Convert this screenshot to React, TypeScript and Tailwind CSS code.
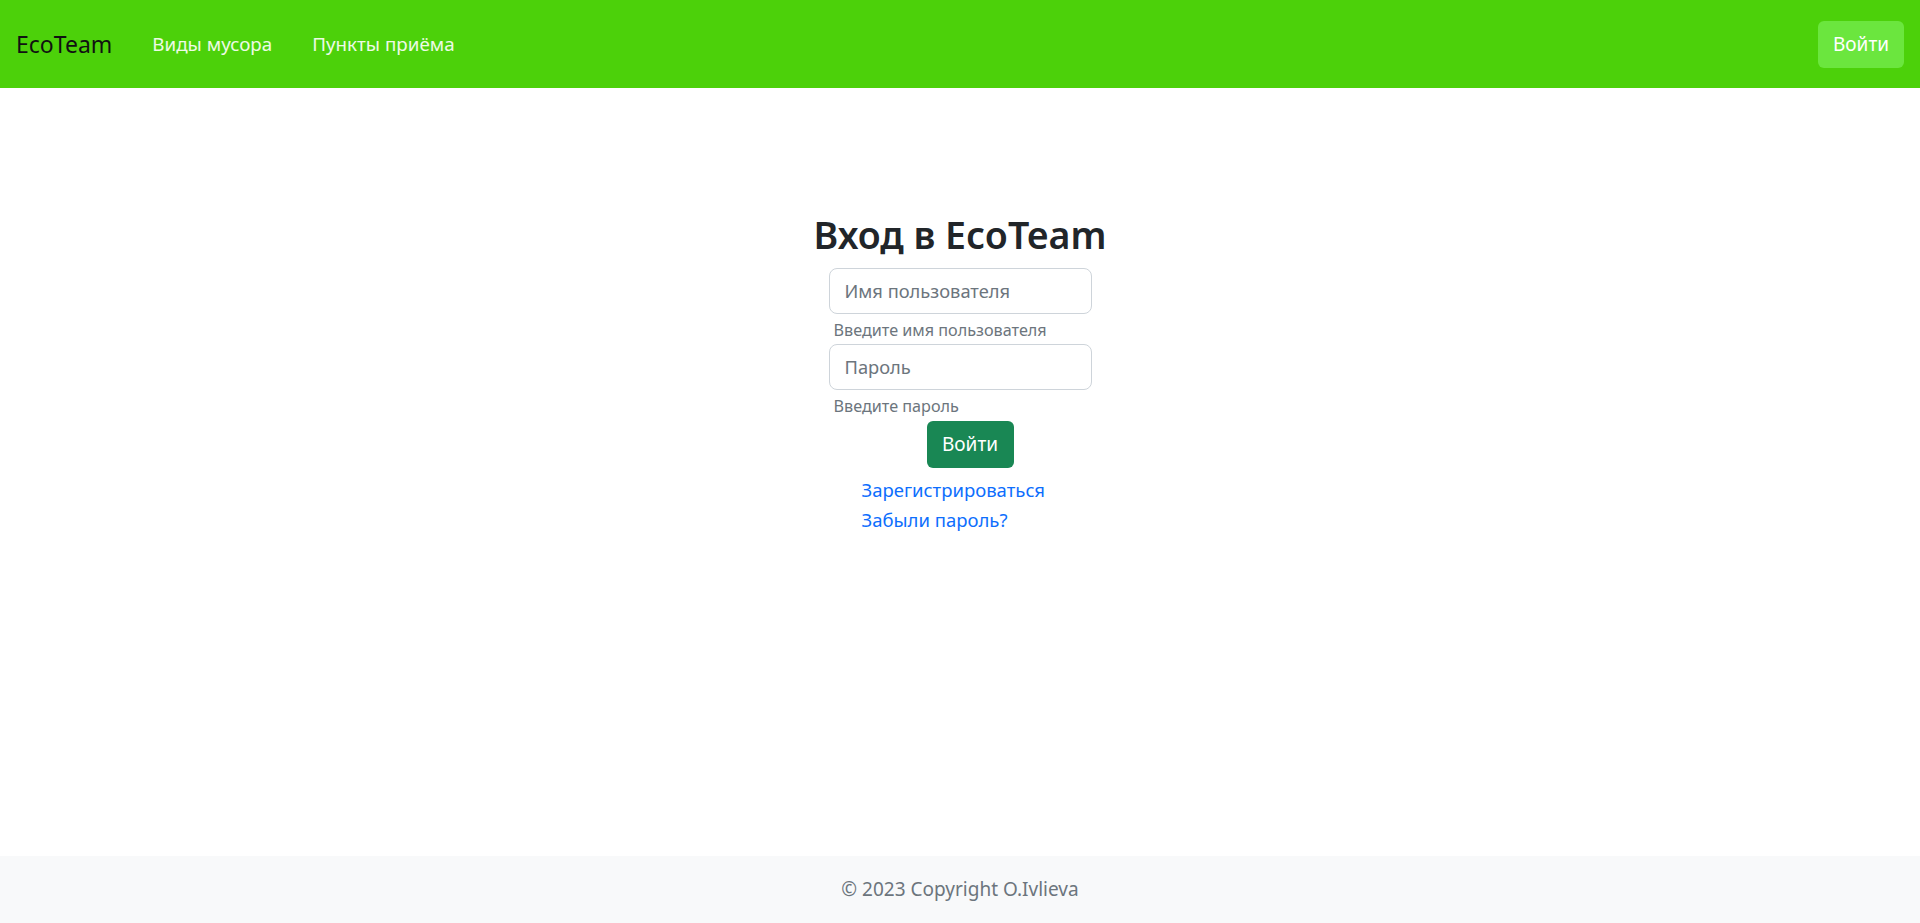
import React from "react";

export default function App() {
  return (
    <div className="min-h-[923px] flex flex-col bg-white" style={{ fontFamily: '"Noto Sans", "Open Sans", sans-serif' }}>
      <nav className="h-[88px] bg-[#4cd10a] flex items-center px-4 shrink-0">
        <span className="text-[23px] text-[#111] mr-[40px] font-normal">EcoTeam</span>
        <a className="text-[18.8px] text-white/90 px-0 mr-[40px]">Виды мусора</a>
        <a className="text-[18.8px] text-white/90">Пункты приёма</a>
        <div className="flex-1" />
        <button className="h-[47px] w-[86px] rounded-[6px] bg-[#6be63e] text-white text-[19px]">Войти</button>
      </nav>
      <main className="flex-1 pt-[123px]">
        <div className="flex flex-col items-center">
          <h1 className="text-[37.5px] leading-[48px] font-semibold text-[#212529] mb-[9px]">Вход в EcoTeam</h1>
          <div className="w-[263px] flex flex-col">
            <div className="h-[46px] rounded-[8px] border border-[#ced4da] flex items-center px-[15px] text-[18.3px] text-[#6c757d]">Имя пользователя</div>
            <div className="ml-[5px] mt-[4px] text-[16.2px] leading-[24px] text-[#6c757d] mb-[2px]">Введите имя пользователя</div>
            <div className="h-[46px] rounded-[8px] border border-[#ced4da] flex items-center px-[15px] text-[18.3px] text-[#6c757d]">Пароль</div>
            <div className="ml-[5px] mt-[4px] text-[16.2px] leading-[24px] text-[#6c757d]">Введите пароль</div>
            <button className="ml-[98px] mt-[3px] h-[47px] w-[87px] rounded-[6px] bg-[#198754] text-white text-[19px]">Войти</button>
            <a className="ml-[33px] mt-[7px] text-[18.5px] leading-[30px] text-[#0d6efd]">Зарегистрироваться</a>
            <a className="ml-[33px] text-[18.5px] leading-[30px] text-[#0d6efd]">Забыли пароль?</a>
          </div>
        </div>
      </main>
      <footer className="h-[67px] bg-[#f8f9fa] flex items-center justify-center shrink-0">
        <span className="text-[19px] text-[#6c757d]">© 2023 Copyright O.Ivlieva</span>
      </footer>
    </div>
  );
}
